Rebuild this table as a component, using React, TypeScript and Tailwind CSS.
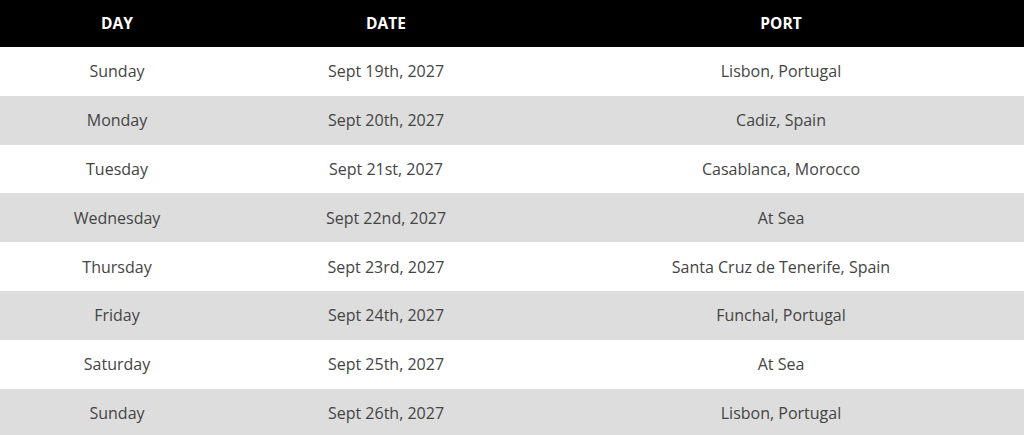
const rows = [
  ["Sunday", "Sept 19th, 2027", "Lisbon, Portugal"],
  ["Monday", "Sept 20th, 2027", "Cadiz, Spain"],
  ["Tuesday", "Sept 21st, 2027", "Casablanca, Morocco"],
  ["Wednesday", "Sept 22nd, 2027", "At Sea"],
  ["Thursday", "Sept 23rd, 2027", "Santa Cruz de Tenerife, Spain"],
  ["Friday", "Sept 24th, 2027", "Funchal, Portugal"],
  ["Saturday", "Sept 25th, 2027", "At Sea"],
  ["Sunday", "Sept 26th, 2027", "Lisbon, Portugal"],
];

export default function App() {
  return (
    <div className="w-[1024px] h-[435px] overflow-hidden bg-white font-['Open_Sans',sans-serif]">
      <div className="grid grid-cols-[234px_304px_1fr] h-[47px] bg-black text-white font-bold text-[15.5px] items-center text-center">
        <div>DAY</div>
        <div>DATE</div>
        <div>PORT</div>
      </div>
      {rows.map((r, i) => (
        <div
          key={i}
          className={`grid grid-cols-[234px_304px_1fr] h-[48.8px] items-center text-center text-[16px] text-[#444] ${
            i % 2 === 1 ? "bg-[#dddddd]" : "bg-white"
          }`}
        >
          <div>{r[0]}</div>
          <div>{r[1]}</div>
          <div>{r[2]}</div>
        </div>
      ))}
    </div>
  );
}
